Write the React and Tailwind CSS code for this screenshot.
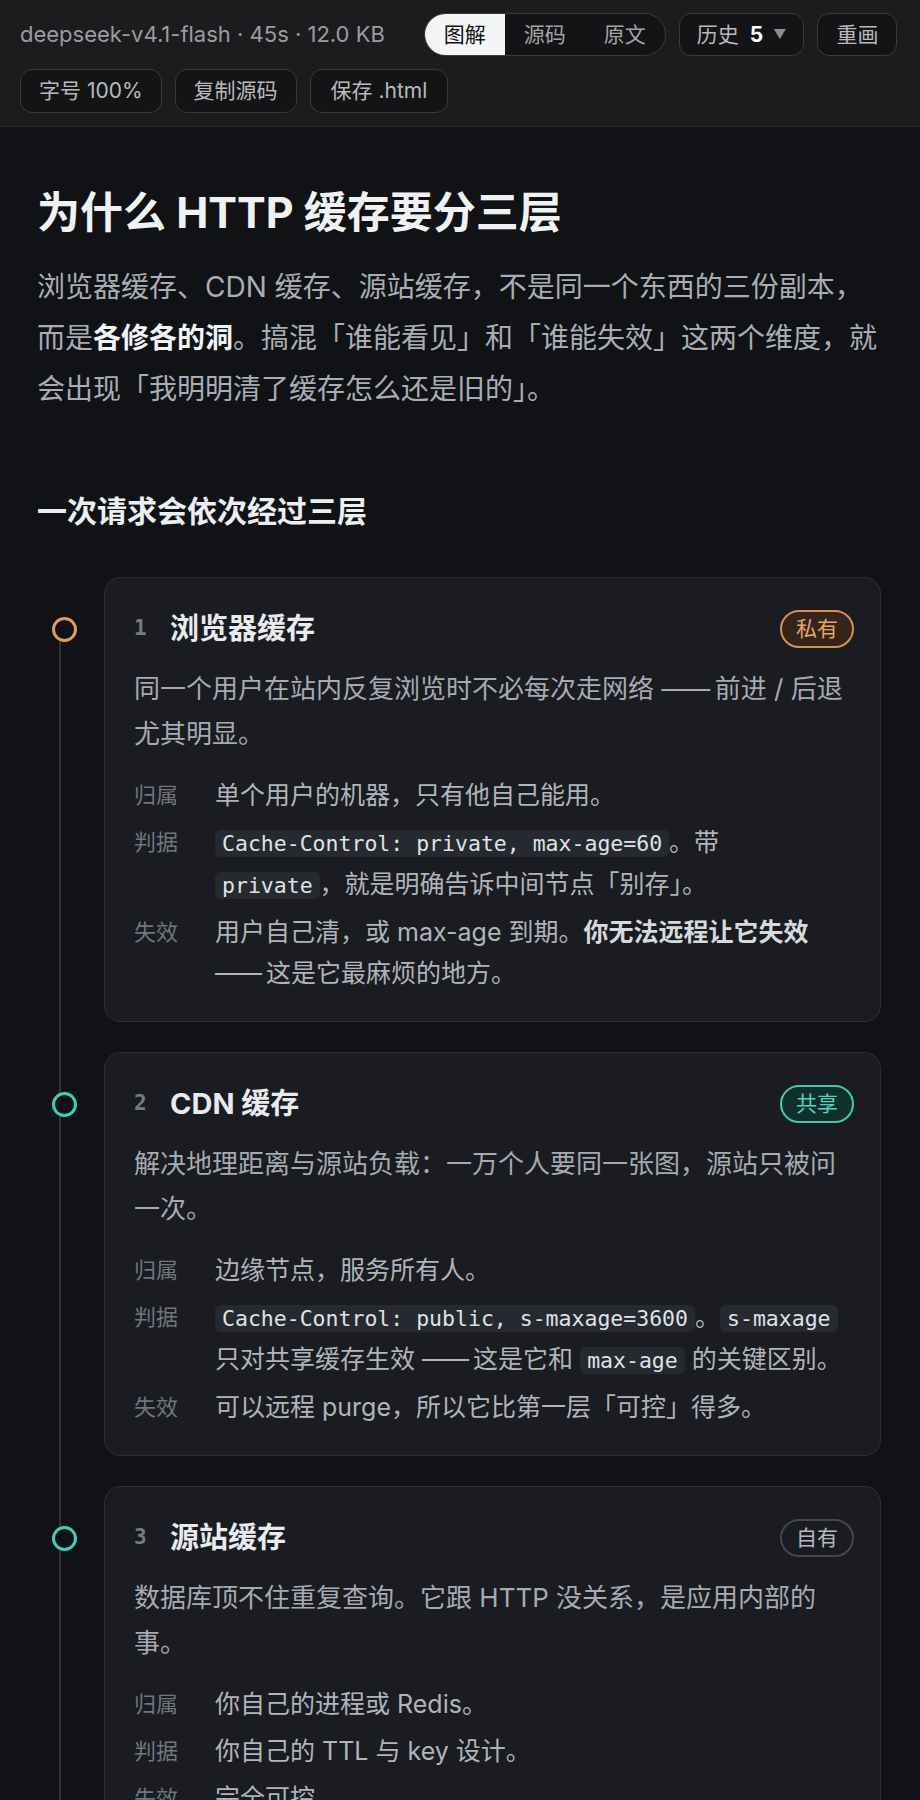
import React from "react";

const Code = ({ children }) => (
  <code className="rounded-[6px] bg-[#262a30] px-[7px] py-[1px] font-['DejaVu_Sans_Mono',monospace] text-[21.5px] text-[#dfe2e6]">
    {children}
  </code>
);

const Dash = () => <span className="tracking-[-3px]">——</span>;

const cards = [
  {
    n: 1,
    title: "浏览器缓存",
    tag: "私有",
    tone: "orange",
    desc: (
      <>
        同一个用户在站内反复浏览时不必每次走网络 <Dash /> 前进 / 后退尤其明显。
      </>
    ),
    rows: [
      ["归属", <>单个用户的机器，只有他自己能用。</>],
      [
        "判据",
        <>
          <Code>Cache-Control: private, max-age=60</Code>。带<Code>private</Code>
          ，就是明确告诉中间节点「别存」。
        </>,
      ],
      [
        "失效",
        <>
          用户自己清，或 max-age 到期。
          <b className="font-bold text-[#d6d9dd]">你无法远程让它失效</b> <Dash /> 这是它最麻烦的地方。
        </>,
      ],
    ],
  },
  {
    n: 2,
    title: "CDN 缓存",
    tag: "共享",
    tone: "teal",
    desc: <>解决地理距离与源站负载：一万个人要同一张图，源站只被问一次。</>,
    rows: [
      ["归属", <>边缘节点，服务所有人。</>],
      [
        "判据",
        <>
          <Code>Cache-Control: public, s-maxage=3600</Code>。<Code>s-maxage</Code>
          只对共享缓存生效 <Dash /> 这是它和 <Code>max-age</Code> 的关键区别。
        </>,
      ],
      ["失效", <>可以远程 purge，所以它比第一层「可控」得多。</>],
    ],
  },
  {
    n: 3,
    title: "源站缓存",
    tag: "自有",
    tone: "gray",
    desc: <>数据库顶不住重复查询。它跟 HTTP 没关系，是应用内部的事。</>,
    rows: [
      ["归属", <>你自己的进程或 Redis。</>],
      ["判据", <>你自己的 TTL 与 key 设计。</>],
      ["失效", <>完全可控。</>],
    ],
  },
];

const tagStyles = {
  orange: "border-[#d98f50] bg-[#35241a] text-[#e9a468]",
  teal: "border-[#3ccab1] bg-[#11302c] text-[#4fd3ba]",
  gray: "border-[#44474e] bg-transparent text-[#b4b8bf]",
};

const dotStyles = {
  orange: "border-[#e39b5b]",
  teal: "border-[#3fcfb5]",
  gray: "border-[#3fcfb5]",
};

function Card({ card }) {
  return (
    <div className="flex-1 rounded-[16px] border border-[#2b2e34] bg-[#1a1c21] pt-[30px] pb-[27px] pl-[29px] pr-[26px]">
      <div className="flex h-[42px] items-center justify-between">
        <div className="flex items-center">
          <span className="w-[36px] font-['DejaVu_Sans_Mono',monospace] text-[21px] font-bold text-[#767b84]">
            {card.n}
          </span>
          <span className="text-[29px] font-bold text-[#e8eaee]">{card.title}</span>
        </div>
        <span
          className={`flex h-[38px] items-center rounded-full border-2 px-[14px] text-[21px] ${tagStyles[card.tone]}`}
        >
          {card.tag}
        </span>
      </div>
      <p className="mt-[16px] text-[26px] leading-[45px] text-[#a6aab2]">{card.desc}</p>
      <div className="mt-[19px] flex flex-col gap-[6px]">
        {card.rows.map(([label, value]) => (
          <div key={label} className="flex">
            <span className="w-[81px] shrink-0 text-[22px] leading-[41px] text-[#70757e]">{label}</span>
            <div className="flex-1 pr-[11px] text-[25px] leading-[41px] text-[#b0b4bb]">{value}</div>
          </div>
        ))}
      </div>
    </div>
  );
}

const Btn = ({ children, className = "" }) => (
  <button
    className={`flex items-center rounded-[12px] border border-[#3a3a3f] bg-[#141417] text-[21px] text-[#b9b9be] ${className}`}
  >
    {children}
  </button>
);

export default function App() {
  return (
    <div className="min-h-screen bg-[#111216] font-['Inter','Noto_Sans_CJK_SC',sans-serif]">
      <header className="flex flex-wrap items-center gap-[13px] border-b border-[#2a2a2e] bg-[#1c1c1f] px-5 py-[13px]">
        <span className="mr-[26px] text-[22px] text-[#9b9ba1]">deepseek-v4.1-flash · 45s · 12.0 KB</span>
        <div className="flex h-[43px] overflow-hidden rounded-full border border-[#3a3a3f] bg-[#141417] text-[21px]">
          <span className="flex w-[80px] items-center justify-center bg-[#f4f5f7] text-[#111]">图解</span>
          <span className="flex w-[80px] items-center justify-center text-[#a3a3a9]">源码</span>
          <span className="flex w-[80px] items-center justify-center text-[#a3a3a9]">原文</span>
        </div>
        <Btn className="h-[43px] px-[17px]">
          历史
          <b className="ml-[11px] font-bold text-white">5</b>
          <span className="ml-[10px] text-[13px] text-[#8d8d93]">▼</span>
        </Btn>
        <Btn className="h-[43px] px-[18px]">重画</Btn>
        <Btn className="h-[44px] px-[18px]">字号 100%</Btn>
        <Btn className="h-[44px] px-[18px]">复制源码</Btn>
        <Btn className="h-[44px] px-[20px]">保存 .html</Btn>
      </header>

      <main className="pl-[37px] pr-[39px] pt-[57px] pb-[60px]">
        <h1 className="text-[43px] font-bold leading-[56px] text-[#f0f1f3]">为什么 HTTP 缓存要分三层</h1>
        <p className="mt-[22px] text-[28px] leading-[51px] text-[#a9adb4]">
          浏览器缓存、CDN 缓存、源站缓存，不是同一个东西的三份副本，而是
          <b className="font-bold text-[#f3f4f6]">各修各的洞</b>
          。搞混「谁能看见」和「谁能失效」这两个维度，就会出现「我明明清了缓存怎么还是旧的」。
        </p>

        <h2 className="mt-[75px] text-[30px] font-bold leading-[42px] text-[#eceef1]">一次请求会依次经过三层</h2>

        <div className="relative mt-[45px]">
          <div className="absolute left-[22px] top-[52px] bottom-0 w-[2px] bg-[#30343b]" />
          <div className="flex flex-col gap-[30px]">
            {cards.map((card) => (
              <div key={card.n} className="flex">
                <div className="w-[67px] shrink-0 pl-[15px] pt-[40px]">
                  <div
                    className={`relative h-[25px] w-[25px] rounded-full border-[3px] bg-[#111216] ${dotStyles[card.tone]}`}
                  />
                </div>
                <Card card={card} />
              </div>
            ))}
          </div>
        </div>
      </main>
    </div>
  );
}
